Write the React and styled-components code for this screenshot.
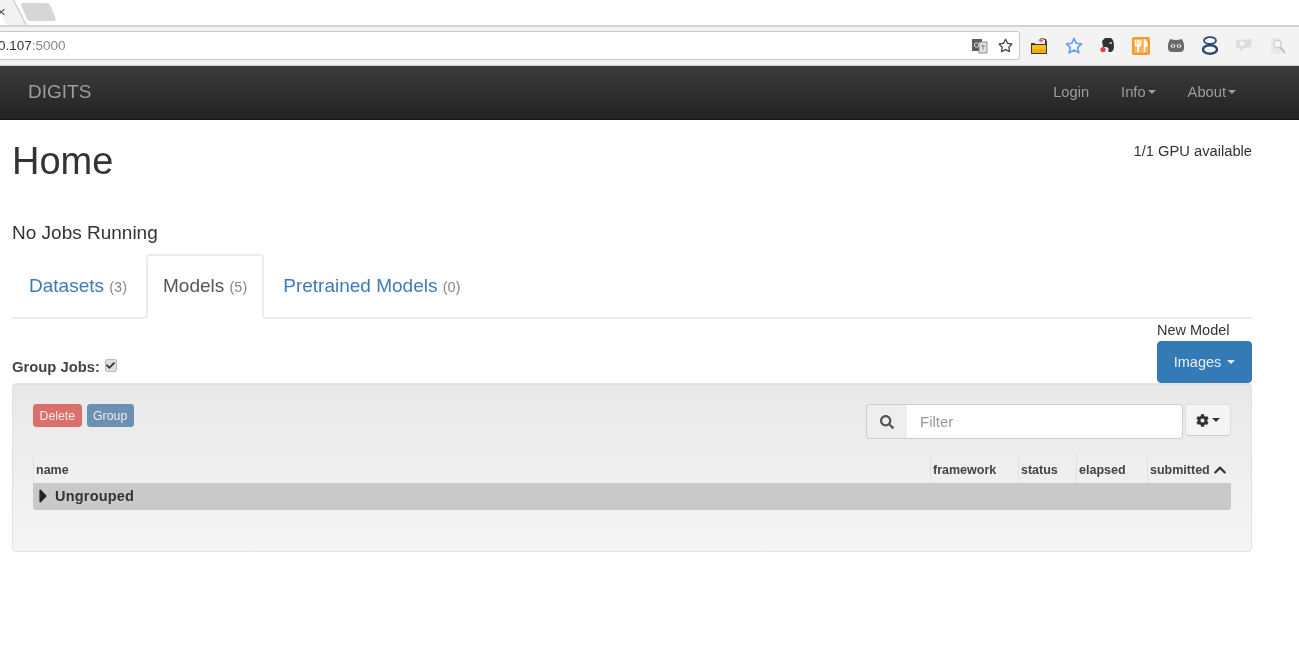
import React from 'react';
import styled, { createGlobalStyle } from 'styled-components';
import { FaCaretRight, FaChevronUp, FaCog, FaSearch, FaCheck, FaRegStar } from 'react-icons/fa';

const GlobalStyle = createGlobalStyle`
  html, body {
    margin: 0;
    padding: 0;
    background: #fff;
    overflow: hidden;
  }
  body {
    font-family: "Liberation Sans", Arial, sans-serif;
    color: #333;
  }
  * { box-sizing: border-box; }
`;

// the screenshot was scaled up, so everything in it is slightly soft
const Screen = styled.div`
  filter: blur(0.45px);
`;

const TabStrip = styled.div`
  height: 27px;
  background: #fff;
  border-bottom: 2px solid #d2d2d2;
  position: relative;
  overflow: hidden;
`;

const BrowserTab = styled.div`
  width: 20px;
  height: 25px;
  background: #f2f2f2;
  border-right: 1px solid #bdbdbd;
  transform: skewX(27deg);
  transform-origin: top left;
  margin-left: -6px;
`;

const CloseMark = styled.span`
  position: absolute;
  left: -3px;
  top: 3px;
  font-size: 15px;
  line-height: 18px;
  color: #555;
`;

const NewTab = styled.div`
  position: absolute;
  left: 24px;
  top: 3px;
  width: 29px;
  height: 18px;
  background: #d6d6d6;
  border-radius: 3px;
  transform: skewX(22deg);
`;

const AddressRow = styled.div`
  height: 39px;
  background: #f3f3f3;
  border-bottom: 1px solid #d0d0d0;
  display: flex;
  align-items: center;
  padding-bottom: 1px;
`;

const Omnibox = styled.div`
  width: 1020px;
  height: 29px;
  background: #fff;
  border: 1px solid #c8c8c8;
  border-left: none;
  border-radius: 0 3px 3px 0;
  display: flex;
  align-items: center;
  justify-content: space-between;
  padding-right: 6px;
`;

const Url = styled.div`
  font-size: 13.5px;
  color: #888;
  margin-left: -2px;
  b {
    font-weight: 400;
    color: #333;
  }
`;

const OmniIcons = styled.div`
  display: flex;
  align-items: center;
  gap: 10px;
`;

const Extensions = styled.div`
  flex: 1;
  display: flex;
  align-items: center;
  padding-left: 10px;
  gap: 17px;
`;

const Navbar = styled.nav`
  height: 54px;
  background: linear-gradient(to bottom, #3c3c3c 0%, #222 100%);
  border-bottom: 1px solid #111;
  display: flex;
  align-items: center;
  justify-content: space-between;
  padding: 0 63px 2px 28px;
`;

const Brand = styled.a`
  font-size: 19px;
  color: #9d9d9d;
`;

const NavLinks = styled.div`
  display: flex;
  align-items: center;
  gap: 32px;
`;

const NavLink = styled.a`
  font-size: 14.7px;
  color: #9d9d9d;
  display: flex;
  align-items: center;
`;

const Caret = styled.span`
  display: inline-block;
  width: 0;
  height: 0;
  margin-left: ${({ $gap }) => $gap || 2}px;
  border-top: 4px solid ${({ $color }) => $color || 'currentColor'};
  border-left: 4px solid transparent;
  border-right: 4px solid transparent;
`;

const Page = styled.main`
  padding: 0 47px 0 12px;
`;

const Header = styled.div`
  display: flex;
  justify-content: space-between;
  align-items: flex-start;
  height: 100px;
`;

const Title = styled.h1`
  margin: 19px 0 0;
  font-size: 38px;
  line-height: 44px;
  font-weight: 400;
`;

const GpuNote = styled.div`
  margin-top: 23px;
  font-size: 14.7px;
  line-height: 17px;
`;

const Status = styled.div`
  font-size: 19px;
  line-height: 26px;
`;

const Tabs = styled.div`
  display: flex;
  gap: 2px;
  margin-top: 8px;
  height: 65px;
  border-bottom: 2px solid #ececec;
`;

const Tab = styled.a`
  height: 65px;
  padding: 18px 15px 0;
  font-size: 19px;
  line-height: 24px;
  color: ${({ $active }) => ($active ? '#555' : '#3f7ab7')};
  background: ${({ $active }) => ($active ? '#fff' : 'transparent')};
  border-radius: 4px 4px 0 0;
  border: 2px solid ${({ $active }) => ($active ? '#ececec' : 'transparent')};
  border-bottom-color: ${({ $active }) => ($active ? '#fff' : 'transparent')};
  white-space: nowrap;
  small {
    font-size: 14.5px;
    color: #888;
  }
`;

const ActionRow = styled.div`
  height: 64px;
  display: flex;
  justify-content: space-between;
  align-items: flex-end;
`;

const GroupToggle = styled.label`
  display: flex;
  align-items: center;
  gap: 5px;
  font-size: 14.8px;
  font-weight: 700;
  color: #444;
  padding-bottom: 8px;
`;

const CheckBox = styled.span`
  width: 12px;
  height: 13px;
  margin-top: -3px;
  background: #ddd;
  border: 1px solid #bbb;
  border-radius: 2px;
  display: flex;
  align-items: center;
  justify-content: center;
  color: #333;
  font-size: 9px;
`;

const NewModel = styled.div`
  width: 95px;
  display: flex;
  flex-direction: column;
`;

const NewModelLabel = styled.div`
  font-size: 14.5px;
  line-height: 17px;
  margin-bottom: 2px;
  white-space: nowrap;
`;

const ImagesButton = styled.button`
  height: 42px;
  border: 1px solid #337ab7;
  border-radius: 4px;
  background: #337ab7;
  color: #e8eff6;
  font: 400 14.5px "Liberation Sans", Arial, sans-serif;
  display: flex;
  align-items: center;
  justify-content: center;
  padding: 0;
`;

const Well = styled.section`
  height: 169px;
  background: linear-gradient(to bottom, #e8e8e8 0%, #f5f5f5 100%);
  border: 1px solid #e3e3e3;
  border-radius: 4px;
  padding: 20px 20px 0;
  box-shadow: inset 0 1px 1px rgba(0, 0, 0, 0.05);
`;

const Toolbar = styled.div`
  display: flex;
  justify-content: space-between;
  align-items: flex-start;
  height: 50px;
`;

const SmallButtons = styled.div`
  display: flex;
  gap: 5px;
`;

const SmallButton = styled.button`
  height: 23px;
  padding: 0 5.5px;
  border-radius: 3px;
  border: 1px solid ${({ $color }) => $color};
  background: ${({ $color }) => $color};
  color: #f3e9e9;
  font: 400 12.3px "Liberation Sans", Arial, sans-serif;
`;

const FilterGroup = styled.div`
  display: flex;
  align-items: flex-start;
  gap: 2px;
`;

const SearchField = styled.div`
  display: flex;
`;

const SearchAddon = styled.div`
  width: 41px;
  height: 35px;
  background: #eee;
  border: 1px solid #ccc;
  border-right: none;
  border-radius: 4px 0 0 4px;
  display: flex;
  align-items: center;
  justify-content: center;
  color: #555;
  font-size: 14px;
`;

const FilterInput = styled.input`
  width: 276px;
  height: 35px;
  padding: 0 13px;
  background: #fff;
  border: 1px solid #ccc;
  border-left: none;
  border-radius: 0 4px 4px 0;
  font: 400 15px "Liberation Sans", Arial, sans-serif;
  &::placeholder {
    color: #999;
    opacity: 1;
  }
`;

const ColumnsButton = styled.button`
  width: 46px;
  height: 32px;
  background: #f5f5f5;
  border: 1px solid #ddd;
  border-bottom-color: #ccc;
  border-radius: 3px;
  color: #333;
  font-size: 13px;
  display: flex;
  align-items: center;
  justify-content: center;
  padding: 0;
`;

const JobTable = styled.div`
  display: grid;
  grid-template-columns: 897px 88px 58px 71px 84px;
`;

const HeadCell = styled.div`
  height: 29px;
  padding: 3px 0 0 2px;
  font-size: 12.5px;
  line-height: 17px;
  font-weight: 700;
  color: #444;
  border-left: 1px solid #e2e2e2;
  display: flex;
  align-items: center;
  gap: 3px;
  white-space: nowrap;
`;

const GroupRow = styled.div`
  grid-column: 1 / -1;
  height: 27px;
  padding-bottom: 2px;
  background: #c9c9c9;
  border-radius: 0 0 3px 3px;
  display: flex;
  align-items: center;
  font-size: 14.5px;
  font-weight: 700;
  color: #333;
  letter-spacing: 0.2px;
`;

const ExpandIcon = styled(FaCaretRight)`
  width: 9px;
  height: 22px;
  color: #222;
  margin: 0 7px 0 6px;
`;

// browser extension toolbar icons, drawn by hand
const FolderIcon = () => (
  <svg width="18" height="18" viewBox="0 0 18 18">
    <path d="M1 6 L5 6 L11 1 L16 2 L17 5 L17 17 L1 17 Z" fill="#3d3a2c" />
    <path d="M5 5 L11 1.5 L15 3 L15 7 L5 7 Z" fill="#f6e6e2" />
    <path d="M10 2 L13 3 L12 5 L9 4 Z" fill="#dc5a55" />
    <rect x="2" y="8" width="14" height="8" rx="1" fill="#f7c21f" />
    <rect x="2" y="12" width="14" height="4" rx="1" fill="#f2a90f" />
  </svg>
);

const BlueStarIcon = () => (
  <svg width="18" height="17" viewBox="0 0 18 17">
    <path d="M9 1.5 L11.2 6.3 L16.6 6.9 L12.6 10.5 L13.8 15.7 L9 13 L4.2 15.7 L5.4 10.5 L1.4 6.9 L6.8 6.3 Z" fill="#fff" stroke="#6aa2f3" strokeWidth="1.8" strokeLinejoin="round" />
  </svg>
);

const EvernoteIcon = () => (
  <svg width="15" height="17" viewBox="0 0 15 17">
    <path d="M2 4 L5 1 L11 1 Q14 3 14 9 Q14 14 11 15 L8.5 15 L8.5 11 L6 10 L3 10 Z" fill="#2f3331" />
    <path d="M9.5 5 L12 5.5 L12 7 L9.5 6.5 Z" fill="#d8d8d8" />
    <circle cx="3" cy="12.5" r="2.6" fill="#ec3a46" />
  </svg>
);

const ForkIcon = () => (
  <svg width="18" height="18" viewBox="0 0 18 18">
    <rect width="18" height="18" rx="2" fill="#f59a23" />
    <rect x="2" y="2" width="14" height="14" fill="#f8b45c" />
    <path d="M6 3 V15 M3.5 3 V7 Q3.5 9 6 9 Q8.5 9 8.5 7 V3" fill="none" stroke="#fff" strokeWidth="1.7" />
    <path d="M12.5 15 V3 Q15 5 15 9 H12.5" fill="#fff" stroke="#fff" strokeWidth="1.4" />
  </svg>
);

const OwlIcon = () => (
  <svg width="18" height="15" viewBox="0 0 18 15">
    <path d="M1 6 L3 1 Q9 3 15 1 L17 6 L17 10 Q17 14 13 14 L5 14 Q1 14 1 10 Z" fill="#6b6b6b" />
    <ellipse cx="6" cy="8" rx="2.4" ry="1.8" fill="#eee" />
    <ellipse cx="12" cy="8" rx="2.4" ry="1.8" fill="#eee" />
    <circle cx="6" cy="8" r="1" fill="#555" />
    <circle cx="12" cy="8" r="1" fill="#555" />
  </svg>
);

const RingsIcon = () => (
  <svg width="16" height="19" viewBox="0 0 16 19">
    <ellipse cx="8" cy="4.5" rx="6" ry="3.4" fill="#fff" stroke="#27496d" strokeWidth="1.8" />
    <ellipse cx="8" cy="13.5" rx="7" ry="4.2" fill="#fff" stroke="#27496d" strokeWidth="2.4" />
    <path d="M3 10 Q8 8 13 10" fill="none" stroke="#27496d" />
  </svg>
);

const BubbleIcon = () => (
  <svg width="18" height="15" viewBox="0 0 18 15">
    <path d="M1 2 L17 1 L16 9 L9 10 L6 14 L5 10 L1 10 Z" fill="#dcdcdc" />
    <circle cx="7" cy="5.5" r="2.4" fill="#f3f3f3" />
  </svg>
);

const LensIcon = () => (
  <svg width="16" height="18" viewBox="0 0 16 18">
    <rect x="1" y="1" width="10" height="16" rx="1" fill="#e9e9e9" />
    <circle cx="7.5" cy="7" r="3.8" fill="#f6f6f6" stroke="#d0d0d0" strokeWidth="1.4" />
    <path d="M10 10 L15 16" stroke="#c4c4c4" strokeWidth="2" />
  </svg>
);

const TranslateIcon = () => (
  <svg width="17" height="16" viewBox="0 0 17 16">
    <rect x="1" y="1" width="10" height="12" fill="#5d5d5d" />
    <rect x="8" y="4" width="8" height="11" fill="#e2e2e2" stroke="#777" strokeWidth="0.8" />
    <circle cx="5.5" cy="7" r="2.2" fill="none" stroke="#ddd" />
    <path d="M10 8 H14 M12 7 V12" stroke="#777" strokeWidth="0.8" />
  </svg>
);

const App = () => (
  <Screen>
    <GlobalStyle />
    <TabStrip>
      <BrowserTab />
      <CloseMark>×</CloseMark>
      <NewTab />
    </TabStrip>
    <AddressRow>
      <Omnibox>
        <Url><b>0.107</b>:5000</Url>
        <OmniIcons>
          <TranslateIcon />
          <FaRegStar size={15} color="#444" />
        </OmniIcons>
      </Omnibox>
      <Extensions>
        <FolderIcon />
        <BlueStarIcon />
        <EvernoteIcon />
        <ForkIcon />
        <OwlIcon />
        <RingsIcon />
        <BubbleIcon />
        <LensIcon />
      </Extensions>
    </AddressRow>
    <Navbar>
      <Brand>DIGITS</Brand>
      <NavLinks>
        <NavLink>Login</NavLink>
        <NavLink>Info<Caret /></NavLink>
        <NavLink>About<Caret /></NavLink>
      </NavLinks>
    </Navbar>
    <Page>
      <Header>
        <Title>Home</Title>
        <GpuNote>1/1 GPU available</GpuNote>
      </Header>
      <Status>No Jobs Running</Status>
      <Tabs>
        <Tab>Datasets <small>(3)</small></Tab>
        <Tab $active>Models <small>(5)</small></Tab>
        <Tab>Pretrained Models <small>(0)</small></Tab>
      </Tabs>
      <ActionRow>
        <GroupToggle>
          Group Jobs:
          <CheckBox><FaCheck /></CheckBox>
        </GroupToggle>
        <NewModel>
          <NewModelLabel>New Model</NewModelLabel>
          <ImagesButton>Images<Caret $gap={6} $color="#e8eff6" /></ImagesButton>
        </NewModel>
      </ActionRow>
      <Well>
        <Toolbar>
          <SmallButtons>
            <SmallButton $color="#d9706c">Delete</SmallButton>
            <SmallButton $color="#6a90b4">Group</SmallButton>
          </SmallButtons>
          <FilterGroup>
            <SearchField>
              <SearchAddon><FaSearch /></SearchAddon>
              <FilterInput placeholder="Filter" />
            </SearchField>
            <ColumnsButton><FaCog /><Caret $gap={3} /></ColumnsButton>
          </FilterGroup>
        </Toolbar>
        <JobTable>
          <HeadCell>name</HeadCell>
          <HeadCell>framework</HeadCell>
          <HeadCell>status</HeadCell>
          <HeadCell>elapsed</HeadCell>
          <HeadCell>submitted <FaChevronUp size={14} color="#333" /></HeadCell>
          <GroupRow><ExpandIcon />Ungrouped</GroupRow>
        </JobTable>
      </Well>
    </Page>
  </Screen>
);

export default App;
